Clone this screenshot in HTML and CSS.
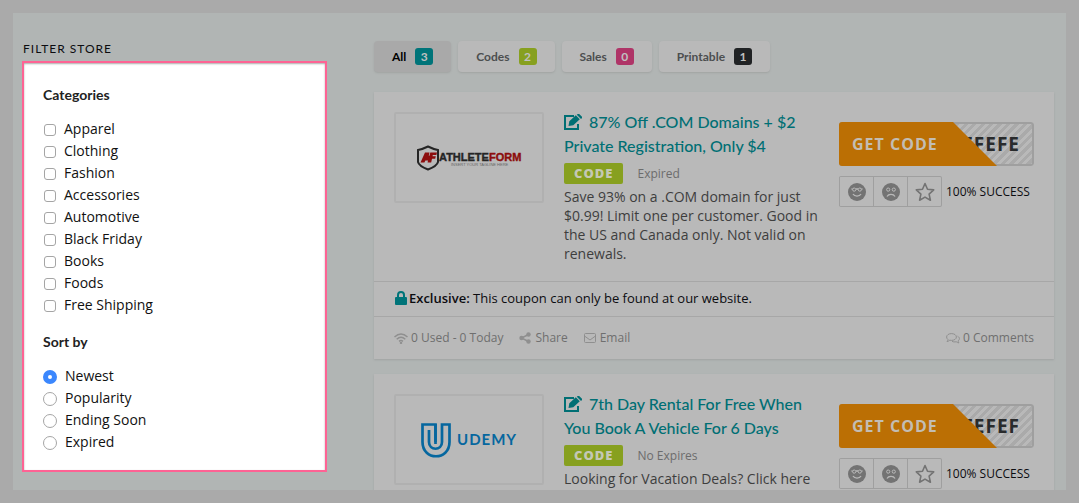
FILE: index.html
```html
<!DOCTYPE html>
<html lang="en">
<head>
<meta charset="utf-8">
<title>Coupons</title>
<link rel="stylesheet" href="styles.css">
</head>
<body>
<svg class="sprite" aria-hidden="true">
  <symbol id="edit" viewBox="0 0 18 16"><path d="M10 2H1v13h13V10" fill="none" stroke="currentColor" stroke-width="2"/><path d="M4.500 12l.8-4.700L11.800 1.200l4 4L9.300 11.300z M12.800.7l.9-.7h1.500l2.800 2.800v1.300l-1 .9z" fill="currentColor"/></symbol>
  <symbol id="smile" viewBox="0 0 18 18"><circle cx="9" cy="9" r="9" fill="currentColor"/><g fill="none" stroke="#b9b9b9"><circle cx="6.200" cy="6.600" r="1.600"/><circle cx="11.800" cy="6.600" r="1.600"/><path d="M3.500 6h1M8 6h2M13.500 6h1M5 11c1.500 2.800 6.500 2.800 8 0" stroke-width="1.300"/></g></symbol>
  <symbol id="frown" viewBox="0 0 18 18"><circle cx="9" cy="9" r="9" fill="currentColor"/><g fill="none" stroke="#b9b9b9"><circle cx="6.200" cy="6.600" r="1.600"/><circle cx="11.800" cy="6.600" r="1.600"/><path d="M5 13.500c1.500-2.800 6.500-2.800 8 0" stroke-width="1.300"/></g></symbol>
  <symbol id="star" viewBox="0 0 20 20"><path d="M10 1.500l2.500 5.700 6.200.7-4.600 4.200 1.300 6.100L10 15.100l-5.400 3.100 1.300-6.100L1.300 7.900l6.200-.7z" fill="none" stroke="currentColor" stroke-width="1.600" stroke-linejoin="round"/></symbol>
</svg>
<main class="page">
  <aside class="sidebar">
    <h2 class="sidebar-title">FILTER STORE</h2>
    <form class="filters">
      <fieldset class="group">
        <legend class="group-title">Categories</legend>
        <label class="option"><input class="check" type="checkbox">Apparel</label>
        <label class="option"><input class="check" type="checkbox">Clothing</label>
        <label class="option"><input class="check" type="checkbox">Fashion</label>
        <label class="option"><input class="check" type="checkbox">Accessories</label>
        <label class="option"><input class="check" type="checkbox">Automotive</label>
        <label class="option"><input class="check" type="checkbox">Black Friday</label>
        <label class="option"><input class="check" type="checkbox">Books</label>
        <label class="option"><input class="check" type="checkbox">Foods</label>
        <label class="option"><input class="check" type="checkbox">Free Shipping</label>
      </fieldset>
      <fieldset class="group">
        <legend class="group-title">Sort by</legend>
        <label class="option"><input class="radio" type="radio" name="sort" checked>Newest</label>
        <label class="option"><input class="radio" type="radio" name="sort">Popularity</label>
        <label class="option"><input class="radio" type="radio" name="sort">Ending Soon</label>
        <label class="option"><input class="radio" type="radio" name="sort">Expired</label>
      </fieldset>
    </form>
  </aside>
  <section class="content">
    <nav class="tabs">
      <button class="tab active" type="button">All <span class="badge teal">3</span></button>
      <button class="tab" type="button">Codes <span class="badge lime">2</span></button>
      <button class="tab" type="button">Sales <span class="badge pink">0</span></button>
      <button class="tab" type="button">Printable <span class="badge dark">1</span></button>
    </nav>

    <article class="card">
      <div class="card-body">
        <div class="thumb">
          <svg width="108" height="26" viewBox="0 0 108 26" role="img" aria-label="AthleteForm">
            <path d="M3 5q5-1 10-3.500Q18 4 23 5v12q-1 4-10 7.500Q4 21 3 17z" fill="none" stroke="#252525" stroke-width="2"/>
            <path d="M5.500 17.500l4.500-10h4.500l-.7 3.300h.7l.8-3.300H22l-.6 2.500h-3.600l-.3 1.300h3.300l-.6 2.400h-3.200l-.8 3.800h-3.600l.4-2h-2.600l-1 2z" fill="#8c0d0d"/>
            <text class="athlete" x="24" y="16"><tspan>ATHLETE</tspan><tspan class="form">FORM</tspan></text>
            <text class="tagline" x="36" y="21">INSERT YOUR TAGLINE HERE</text>
          </svg>
        </div>
        <div class="info">
          <h3 class="title"><a class="title-link" href="#"><svg class="edit"><use href="#edit"/></svg>87% Off .COM Domains + $2 Private Registration, Only $4</a></h3>
          <p class="meta"><span class="tag">CODE</span><span>Expired</span></p>
          <p class="desc">Save 93% on a .COM domain for just $0.99! Limit one per customer. Good in the US and Canada only. Not valid on renewals.</p>
        </div>
        <div class="side">
          <button class="coupon" type="button"><span class="code">EFEFE</span><span class="cover">GET CODE</span></button>
          <div class="rating">
            <div class="votes">
              <button class="vote" type="button" aria-label="Like"><svg class="face"><use href="#smile"/></svg></button>
              <button class="vote" type="button" aria-label="Dislike"><svg class="face"><use href="#frown"/></svg></button>
              <button class="vote" type="button" aria-label="Favorite"><svg class="star"><use href="#star"/></svg></button>
            </div>
            <span class="success">100% SUCCESS</span>
          </div>
        </div>
      </div>
      <p class="exclusive"><svg class="lock" viewBox="0 0 12 14"><path d="M3 7V4a3 3 0 0 1 6 0v3" fill="none" stroke="currentColor" stroke-width="2"/><rect y="6" width="12" height="8" rx="1" fill="currentColor"/></svg><span><b class="strong">Exclusive:</b> This coupon can only be found at our website.</span></p>
      <footer class="card-foot">
        <span class="stat"><svg class="wifi" viewBox="0 0 14 11" fill="none" stroke="currentColor" stroke-width="1.500"><path d="M.5 4Q7-2 13.500 4M2.700 6.200q4.300-3.800 8.600 0M5 8.300q2-1.500 4 0"/><circle cx="7" cy="10" r=".5"/></svg>0 Used - 0 Today</span>
        <a class="stat share" href="#"><svg class="icon12" viewBox="0 0 12 12"><path d="M9.500 2.500L2.500 6l7 3.500" fill="none" stroke="currentColor" stroke-width="1.400"/><g fill="currentColor"><circle cx="9.500" cy="2.500" r="2.200"/><circle cx="2.500" cy="6" r="2.200"/><circle cx="9.500" cy="9.500" r="2.200"/></g></svg>Share</a>
        <a class="stat email" href="#"><svg class="icon12" viewBox="0 0 12 12" fill="none" stroke="currentColor"><rect x=".5" y="1.500" width="11" height="9" rx="1"/><path d="M.5 4L6 8l5.500-4"/></svg>Email</a>
        <a class="stat comments" href="#"><svg class="wifi" viewBox="0 0 14 11" fill="none" stroke="currentColor"><path d="M5.500.6c2.800 0 4.900 1.500 4.900 3.400S8.300 7.400 5.500 7.400L3.800 7.200Q2.500 8.400 1 8.500 2 7.500 2 6.500.6 5.500.6 4C.6 2.100 2.700.6 5.500.6zM11.600 3.200c2.400 1.300 2.300 3.500.4 4.700q0 1.100 1 2-1.500-.1-2.700-1.100-2.800.5-4.300-.5"/></svg>0 Comments</a>
      </footer>
    </article>

    <article class="card">
      <div class="card-body">
        <div class="thumb">
          <svg width="98" height="36" viewBox="0 0 98 36" role="img" aria-label="Udemy">
            <path d="M15.500 22V2.500H2.500V20c0 19 27 19 27 0V2.500H22V20c0 9-13 9-13 0V8" fill="none" stroke="#06679f" stroke-width="2.700"/>
            <path d="M15.500 2v18" fill="none" stroke="#06679f" stroke-width="2.700"/>
            <text class="udemy" x="37" y="23">UDEMY</text>
          </svg>
        </div>
        <div class="info">
          <h3 class="title"><a class="title-link" href="#"><svg class="edit"><use href="#edit"/></svg>7th Day Rental For Free When You Book A Vehicle For 6 Days</a></h3>
          <p class="meta"><span class="tag">CODE</span><span>No Expires</span></p>
          <p class="desc">Looking for Vacation Deals? Click here</p>
        </div>
        <div class="side">
          <button class="coupon" type="button"><span class="code">FEFEF</span><span class="cover">GET CODE</span></button>
          <div class="rating">
            <div class="votes">
              <button class="vote" type="button" aria-label="Like"><svg class="face"><use href="#smile"/></svg></button>
              <button class="vote" type="button" aria-label="Dislike"><svg class="face"><use href="#frown"/></svg></button>
              <button class="vote" type="button" aria-label="Favorite"><svg class="star"><use href="#star"/></svg></button>
            </div>
            <span class="success">100% SUCCESS</span>
          </div>
        </div>
      </div>
    </article>
  </section>
</main>
</body>
</html>
```
FILE: styles.css
```css
* { box-sizing: border-box; }
body {
  margin: 0;
  height: 100vh;
  padding: 13px;
  background: #aaaaaa;
  color: #0c0c10;
  font: 14px/22px "Open Sans", sans-serif;
}
.sprite { display: none; }
h2, h3, p, fieldset { margin: 0; padding: 0; border: 0; }
button { font: inherit; color: inherit; margin: 0; padding: 0; border: 0; background: none; }
a { color: inherit; text-decoration: none; }
svg { flex: none; }

.page {
  display: grid;
  grid-template-columns: 305px minmax(0, 1fr);
  gap: 47px;
  height: 100%;
  padding: 28px 12px 0 9px;
  overflow: hidden;
  background: #b1b5b4;
}

/* Filters */
.sidebar-title {
  padding: 0 1px 4px;
  font: 12px/16px Lato, sans-serif;
  letter-spacing: 1px;
}
.filters {
  padding: 21px 19px 17px;
  border: 2px solid #fe6394;
  background: #fff;
  box-shadow: inset 0 1px 2px #aaa;
  color: #111;
}
.group + .group { margin-top: 15px; }
.group-title {
  padding: 0;
  margin-bottom: 12px;
  font: bold 14px/22px Lato, sans-serif;
  color: #222;
}
.option { display: flex; align-items: center; gap: 8px; }
.check, .radio { appearance: none; background: #fff; border: 1px solid #a5a5a5; }
.check { width: 12px; height: 12px; margin: 2px 0 0 1px; border-radius: 3px; }
.radio { width: 14px; height: 14px; margin: 2px 0 0; border-radius: 50%; }
.radio:checked { border: 5px solid #3b87fd; }

/* Tabs */
.tabs { display: flex; gap: 7px; margin-bottom: 20px; }
.tab {
  display: flex;
  align-items: center;
  gap: 9px;
  height: 31px;
  padding: 0 18px;
  border-radius: 4px;
  background: #b9b9b9;
  box-shadow: 0 1px 2px #a0a3a2;
  color: #4c4e4f;
  font: bold 12px/18px Lato, sans-serif;
}
.tab.active { background: #a9a9a9; color: #000; }
.badge { width: 18px; height: 17px; border-radius: 3px; color: #c0c0c0; line-height: 17px; text-align: center; }
.teal { background: #007479; }
.lime { background: #87a01f; }
.pink { background: #af3467; }
.dark { background: #202224; }

/* Coupon cards */
.card { margin-bottom: 15px; background: #b9b9b9; box-shadow: 0 1px 2px #a0a3a2; }
.card-body {
  display: grid;
  grid-template-columns: 150px minmax(0, 1fr) 195px;
  align-items: start;
  gap: 20px;
  padding: 20px 20px 18px;
}
.thumb {
  display: flex;
  align-items: center;
  justify-content: center;
  height: 91px;
  border: 2px solid #b0b0b0;
  border-radius: 2px;
}
.athlete { font: bold 11px "Liberation Sans", sans-serif; fill: #252525; stroke: #252525; stroke-width: 0.4px; }
.form { fill: #8c0d0d; stroke: #8c0d0d; }
.tagline { font: 4px "Liberation Sans", sans-serif; fill: #666; }
.udemy { font: bold 15px Lato, sans-serif; letter-spacing: 1px; fill: #06679f; }
.title { margin-top: -2px; font: 500 16px/24px Lato, sans-serif; color: #006f74; }
.edit { width: 18px; height: 16px; margin-right: 7px; vertical-align: -2px; }
.meta { display: flex; align-items: center; gap: 14px; margin: 5px 0 3px; font-size: 12px; line-height: 21px; color: #6c6c6c; }
.tag {
  padding: 0 10px;
  border-radius: 2px;
  background: #87a01f;
  color: #c4c8b4;
  font-weight: 800;
  font-size: 13px;
  letter-spacing: 1px;
}
.desc { line-height: 19px; color: #3e3e3e; }
.side { padding-top: 10px; }
.coupon {
  display: grid;
  width: 100%;
  height: 44px;
  border-radius: 3px;
  overflow: hidden;
  font-weight: bold;
  letter-spacing: 1px;
}
.code, .cover { grid-area: 1 / 1; display: flex; align-items: center; }
.code {
  justify-content: flex-end;
  padding-right: 12px;
  border: 2px solid #9f9f9f;
  border-radius: 3px;
  background: repeating-linear-gradient(135deg, #b9b9b9 0 3px, #aaaaaa 3px 6px);
  color: #292b2c;
  font-size: 19px;
}
.cover {
  width: 158px;
  padding-left: 13px;
  background: #bb6f04;
  clip-path: polygon(0 0, 114px 0, 100% 100%, 0 100%);
  color: #c3bdb3;
  font-size: 16px;
}
.rating { display: flex; align-items: center; gap: 4px; margin-top: 10px; }
.votes { display: flex; border: 1px solid #9f9f9f; border-left: 0; border-radius: 2px; }
.vote { display: flex; align-items: center; justify-content: center; width: 34px; height: 29px; border-left: 1px solid #9f9f9f; color: #737373; }
.face { width: 18px; height: 18px; }
.star { width: 20px; height: 20px; }
.success { font-size: 12px; white-space: nowrap; }
.exclusive {
  display: flex;
  align-items: center;
  gap: 2px;
  height: 35px;
  padding: 0 21px 2px;
  border-top: 1px solid #a7a7a7;
  font-size: 13px;
}
.strong { font-weight: 600; }
.lock { width: 12px; height: 14px; color: #007479; }
.card-foot {
  display: flex;
  align-items: center;
  height: 43px;
  padding: 0 20px;
  border-top: 1px solid #a7a7a7;
  color: #6f6f6f;
  font-size: 12px;
}
.stat { display: flex; align-items: center; gap: 3px; }
.stat svg { color: #8f8f8f; }
.share { margin-left: 16px; gap: 4px; }
.email { margin-left: 16px; gap: 4px; }
.comments { margin-left: auto; }
.wifi { width: 14px; height: 11px; }
.icon12 { width: 12px; height: 12px; }
```
